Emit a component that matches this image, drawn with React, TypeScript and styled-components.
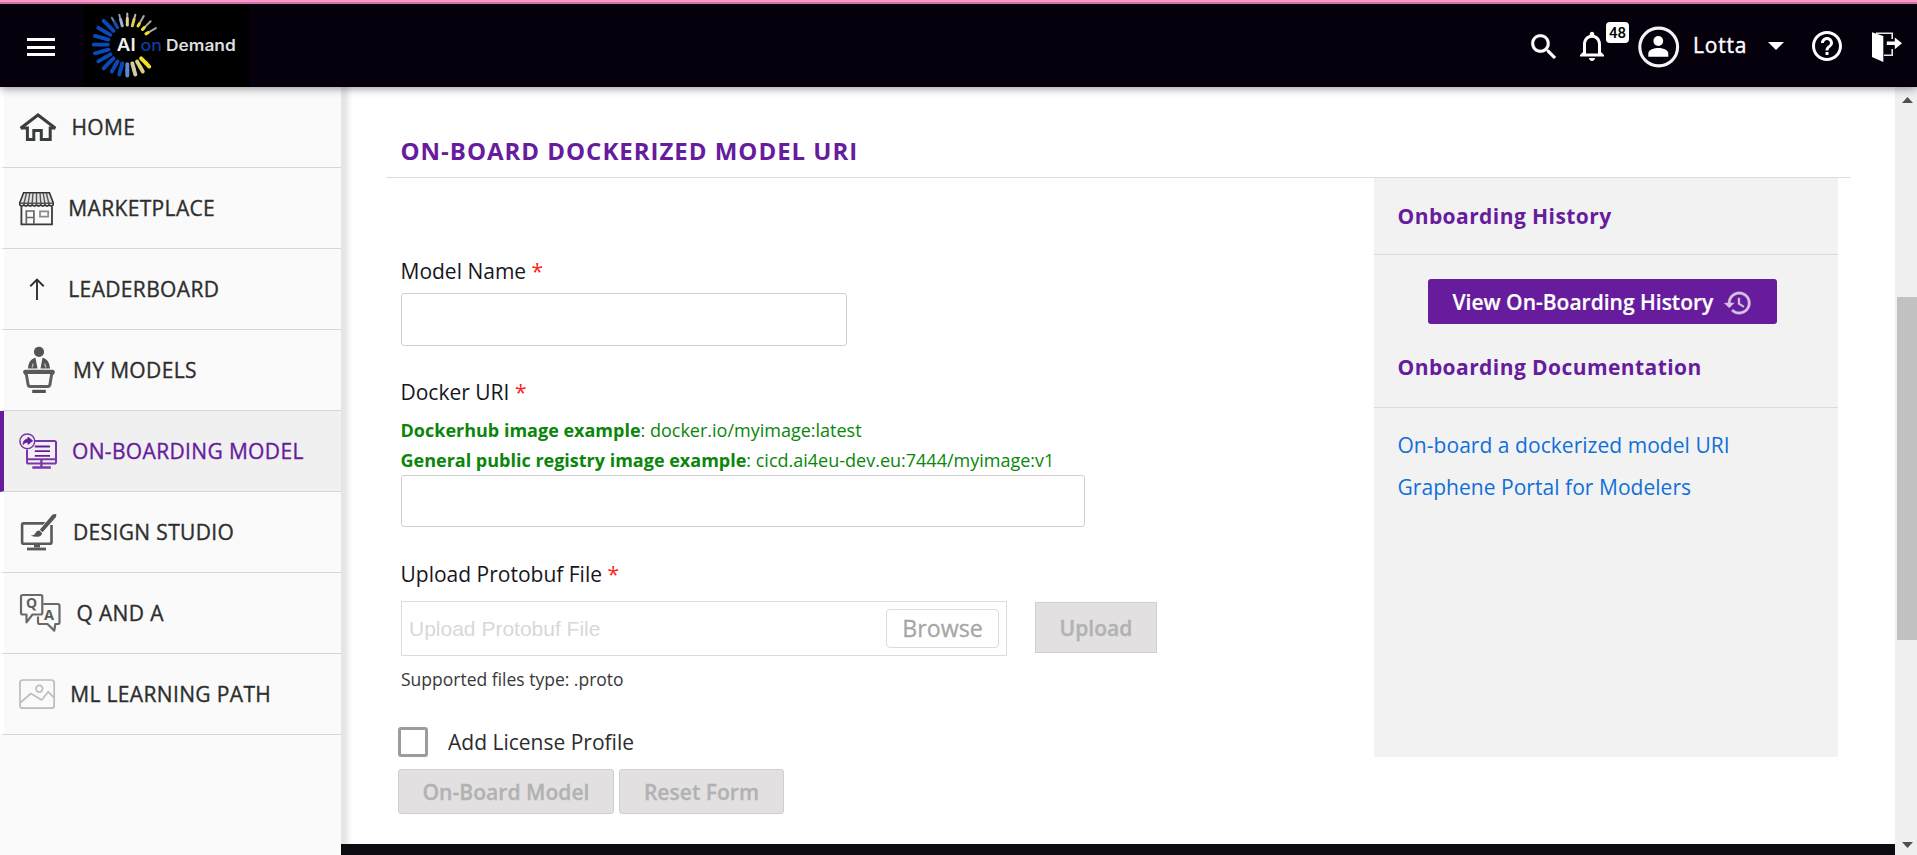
import React from "react";
import styled, { createGlobalStyle, css } from "styled-components";

const purple = "#671c9d";

const GlobalStyle = createGlobalStyle`
  *, *::before, *::after { box-sizing: border-box; }
  body {
    margin: 0;
    background: #fff;
    overflow: hidden;
    font-family: "Open Sans", "Noto Sans", sans-serif;
    font-size: 21px;
  }
  svg { display: block; flex: none; }
`;

/* ---------- shell ---------- */

const Page = styled.div`
  display: flex;
  flex-direction: column;
  width: 100%;
  height: 855px;
`;

const Body = styled.div`
  display: flex;
  flex: 1;
  min-height: 0;
`;

/* ---------- header ---------- */

const Header = styled.header`
  position: relative;
  z-index: 2;
  display: flex;
  align-items: center;
  height: 87px;
  flex: none;
  padding: 0 15px 0 27px;
  border-top: 2px solid #ff96cb;
  background: linear-gradient(#cf72a5 0 2px, #05000c 2px);
  box-shadow: 0 1px 9px rgba(0, 0, 0, 0.45);
`;

const MenuButton = styled.div`
  display: flex;
  flex-direction: column;
  gap: 4.5px;
  width: 28px;
  margin-top: 5px;
`;

const MenuLine = styled.span`
  height: 3px;
  background: #fff;
`;

const LogoBox = styled.div`
  margin: 2px 0 0 29px;
  background: #000;
`;

const HeaderTools = styled.div`
  display: flex;
  align-items: center;
  margin-left: auto;
`;

const Tool = styled.div<{ $gap?: number; $drop?: number }>`
  position: relative;
  margin-left: ${(p) => p.$gap ?? 0}px;
  margin-top: ${(p) => p.$drop ?? 2}px;
`;

const Badge = styled.span`
  position: absolute;
  left: 32px;
  top: -6px;
  width: 23px;
  height: 21px;
  border-radius: 4px;
  background: #fff;
  color: #000;
  font: 500 15px/22px Roboto, sans-serif;
  text-align: center;
`;

const UserName = styled.div`
  margin-left: 13px;
  width: 55px;
  color: #fff;
  line-height: 30px;
  letter-spacing: 0.8px;
  -webkit-text-stroke: 0.4px #fff;
`;

/* ---------- sidebar ---------- */

const Sidebar = styled.nav`
  width: 341px;
  flex: none;
  background: #fafafa;
`;

const NavItem = styled.div<{ $active?: boolean }>`
  display: flex;
  align-items: center;
  height: 81px;
  padding-left: 15px;
  border-left: 4px solid #fff;
  border-bottom: 1px solid #d5d5d5;
  color: #2e2e2e;
  ${(p) =>
    p.$active &&
    css`
      background: #f0f0f0;
      border-left-color: ${purple};
      color: ${purple};
    `}
`;

const NavLabel = styled.span`
  margin-left: 14px;
  letter-spacing: 0.35px;
  white-space: nowrap;
  -webkit-text-stroke: 0.35px currentColor;
`;

/* ---------- main column ---------- */

const Main = styled.main`
  display: flex;
  flex-direction: column;
  flex: 1;
  min-width: 0;
  background: linear-gradient(90deg, #e4e4e4 0, #e8e8e8 5px, #f6f6f6 8px, #fff 12px);
`;

const Content = styled.div`
  flex: 1;
  padding: 48px 45px 0;
`;

const Footer = styled.div`
  height: 11px;
  background: #0d0a11;
`;

const PageTitle = styled.h1`
  margin: 0;
  padding: 0 0 10px 14.5px;
  border-bottom: 1px solid #dcdcdc;
  color: ${purple};
  font-size: 24px;
  font-weight: 700;
  line-height: 32px;
  letter-spacing: 0.98px;
`;

const Columns = styled.div`
  display: flex;
  justify-content: space-between;
  padding: 0 12px;
`;

const Form = styled.form`
  padding-top: 78px;
`;

const Fields = styled.div`
  padding-left: 3px;
`;

const FieldLabel = styled.label`
  display: block;
  margin-left: -0.5px;
  color: #16161e;
  line-height: 30px;
`;

const Star = styled.span`
  color: #f22;
`;

const TextInput = styled.div<{ $w: number; $h: number; $gap?: number; $after: number }>`
  width: ${(p) => p.$w}px;
  height: ${(p) => p.$h}px;
  margin: ${(p) => p.$gap ?? 0}px 0 ${(p) => p.$after}px;
  border: 1px solid #cfcfcf;
  border-radius: 3px;
  background: #fff;
`;

const Hints = styled.div`
  margin-top: 8px;
  margin-left: -0.5px;
  color: #0a860a;
  font-size: 18px;
  line-height: 30px;
`;

const UploadRow = styled.div`
  display: flex;
  align-items: flex-start;
  margin-top: 12px;
`;

const FilePicker = styled.div`
  display: flex;
  align-items: center;
  justify-content: space-between;
  width: 606px;
  height: 55px;
  padding: 0 7px;
  border: 1px solid #dcdcdc;
`;

const Placeholder = styled.span`
  color: #d8d8d8;
  font-family: "Liberation Sans", Arial, sans-serif;
  font-size: 21px;
`;

const Browse = styled.span`
  width: 113px;
  height: 39px;
  border: 1px solid #dcdcdc;
  border-radius: 4px;
  color: #a6a6a6;
  font-size: 23.2px;
  line-height: 37px;
  text-align: center;
  -webkit-text-stroke: 0.3px #a6a6a6;
`;

const DisabledButton = styled.span<{ $w: number; $h: number; $square?: boolean }>`
  width: ${(p) => p.$w}px;
  height: ${(p) => p.$h}px;
  border: 1px solid #d0cfd0;
  border-radius: ${(p) => (p.$square ? 0 : 3)}px;
  background: #e2e0e1;
  color: #b3b2b3;
  font-size: 21.1px;
  font-weight: 600;
  line-height: ${(p) => p.$h - 2}px;
  text-align: center;
  -webkit-text-stroke: 0.3px #b3b2b3;
`;

const UploadSlot = styled.div`
  display: flex;
  margin: 1px 0 0 28px;
`;

const Note = styled.div`
  margin-top: 8px;
  color: #383838;
  font-size: 17.5px;
  line-height: 30px;
`;

const CheckRow = styled.div`
  display: flex;
  gap: 20px;
  margin-top: 33px;
  color: #2c2c2c;
  line-height: 30px;
`;

const CheckBox = styled.span`
  width: 30px;
  height: 30px;
  border: 3px solid #9c9c9c;
  border-radius: 3px;
`;

const Actions = styled.div`
  display: flex;
  gap: 5px;
  margin-top: 12px;
`;

/* ---------- right panel ---------- */

const Panel = styled.aside`
  width: 464px;
  height: 579px;
  background: #f2f2f2;
`;

const PanelHeading = styled.h2<{ $h: number; $gap?: number }>`
  margin: ${(p) => p.$gap ?? 0}px 0 0;
  padding-left: 23.5px;
  height: ${(p) => p.$h}px;
  border-bottom: 1px solid #dadada;
  color: ${purple};
  font-size: 21px;
  font-weight: 700;
  line-height: ${(p) => p.$h - 1}px;
  letter-spacing: 0.43px;
`;

const HistoryButton = styled.div`
  display: flex;
  align-items: center;
  width: 349px;
  height: 45px;
  margin: 24px 0 0 54px;
  padding-left: 24.5px;
  border-radius: 3px;
  background: ${purple};
  color: #fff;
  font-weight: 600;
  white-space: nowrap;
  -webkit-text-stroke: 0.2px #fff;
`;

const HistoryIconSlot = styled.span`
  margin: 3px 0 0 9.5px;
`;

const Links = styled.div`
  display: flex;
  flex-direction: column;
  padding: 16px 0 0 23.5px;
`;

const DocLink = styled.a`
  color: #0f70d8;
  line-height: 42px;
  letter-spacing: 0.04px;
`;

/* ---------- scrollbar ---------- */

const Scrollbar = styled.div`
  display: flex;
  flex-direction: column;
  align-items: center;
  width: 22px;
  flex: none;
  padding: 10px 0 7px 2px;
  background: #f0f0f0;
`;

const Thumb = styled.div`
  width: 20px;
  height: 343px;
  margin: 194px 0 auto;
  background: #c1c1c1;
`;

/* ---------- drawings ---------- */

/* angle, inner colour, outer colour */
const spokes: [number, string, string][] = [
  [30, "#f2df24", "#a9a9a9"],
  [45, "#f0de2c", "#a5a5a5"],
  [60, "#e8d93c", "#a9a9a9"],
  [75, "#d9cf5a", "#b5b5b0"],
  [90, "#dcd699", "#b0b0a8"],
  [105, "#9fb0d0", "#8f9db8"],
  [120, "#1a4cae", "#6e83ad"],
  [135, "#0b48b8", "#0b48b8"],
  [150, "#0b48b8", "#0b48b8"],
  [165, "#0b48b8", "#0b48b8"],
  [180, "#0b48b8", "#0b48b8"],
  [195, "#0b48b8", "#0b48b8"],
  [210, "#0b48b8", "#0b48b8"],
  [225, "#0b48b8", "#0b48b8"],
  [240, "#0b48b8", "#0b48b8"],
  [255, "#0b48b8", "#0b48b8"],
  [270, "#5f88cf", "#5f88cf"],
  [285, "#d0cca6", "#d0cca6"],
  [300, "#ddd27a", "#ddd27a"],
  [315, "#f4e222", "#f4e222"],
];

const Logo = () => (
  <svg width="165" height="83" viewBox="0 0 165 83">
    {spokes.map(([deg, inner, outer]) => {
      const a = (deg * Math.PI) / 180;
      const at = (r: number) => [43.3 + r * Math.cos(a), 40.6 - r * Math.sin(a)];
      const thin = deg < 125;
      const [x1, y1] = at(deg < 75 ? 21.5 : 19.5);
      const [xm, ym] = at(thin && deg < 75 ? 24 : 26);
      const [x2, y2] = at(deg >= 135 && deg <= 225 ? 33.5 : deg < 75 ? 33 : 31);
      return (
        <g key={deg} strokeLinecap="round">
          <line x1={xm} y1={ym} x2={x2} y2={y2} stroke={outer} strokeWidth={thin ? 2 : 3.9} />
          <line x1={x1} y1={y1} x2={xm} y2={ym} stroke={inner} strokeWidth={thin ? 3 : 3.9} />
        </g>
      );
    })}
    <g fontFamily="Inter, sans-serif" fontWeight="500">
      <text x="32.8" y="46.7" fontSize="17.5" fontWeight="600" fill="#f0f0f0" textLength="18.8" lengthAdjust="spacingAndGlyphs">AI</text>
      <text x="56.5" y="46.7" fontSize="16.5" fill="#0d3c9e" textLength="21.5" lengthAdjust="spacingAndGlyphs">on</text>
      <text x="82" y="46.7" fontSize="15.7" fontWeight="600" fill="#dedede" textLength="69.8" lengthAdjust="spacingAndGlyphs">Demand</text>
    </g>
  </svg>
);

const Material = ({ size, d, fill = "#fff", weight = 0 }: { size: number; d: string; fill?: string; weight?: number }) => (
  <svg width={size} height={size} viewBox="0 0 24 24" fill={fill} stroke={fill} strokeWidth={weight}>
    <path d={d} />
  </svg>
);

const searchPath =
  "M15.5 14h-.79l-.28-.27C15.41 12.59 16 11.11 16 9.5 16 5.91 13.09 3 9.5 3S3 5.91 3 9.5 5.91 16 9.5 16c1.61 0 3.09-.59 4.23-1.57l.27.28v.79l5 4.99L20.49 19l-4.99-5zm-6 0C7.01 14 5 11.99 5 9.5S7.01 5 9.5 5 14 7.01 14 9.5 11.99 14 9.5 14z";
const bellPath =
  "M12 22c1.1 0 2-.9 2-2h-4c0 1.1.9 2 2 2zm6-6v-5c0-3.07-1.63-5.64-4.5-6.32V4c0-.83-.67-1.5-1.5-1.5s-1.5.67-1.5 1.5v.68C7.64 5.36 6 7.92 6 11v5l-2 2v1h16v-1l-2-2zm-2 1H8v-6c0-2.48 1.51-4.5 4-4.5s4 2.02 4 4.5v6z";
const helpPath =
  "M11 18h2v-2h-2v2zm1-16C6.48 2 2 6.48 2 12s4.48 10 10 10 10-4.48 10-10S17.52 2 12 2zm0 18c-4.41 0-8-3.59-8-8s3.59-8 8-8 8 3.59 8 8-3.59 8-8 8zm0-14c-2.21 0-4 1.79-4 4h2c0-1.1.9-2 2-2s2 .9 2 2c0 2-3 1.75-3 5h2c0-2.25 3-2.5 3-5 0-2.21-1.79-4-4-4z";
const historyPath =
  "M13 3c-4.97 0-9 4.03-9 9H1l3.89 3.89.07.14L9 12H6c0-3.87 3.13-7 7-7s7 3.13 7 7-3.13 7-7 7c-1.93 0-3.68-.79-4.94-2.06l-1.42 1.42C8.27 19.99 10.51 21 13 21c4.97 0 9-4.03 9-9s-4.03-9-9-9zm-1 5v5l4.28 2.54.72-1.21-3.5-2.08V8H12z";

const AvatarIcon = () => (
  <svg width="42" height="42" viewBox="0 0 42 42">
    <circle cx="20.7" cy="21" r="18.9" fill="none" stroke="#f4f4f4" strokeWidth="3.1" />
    <circle cx="20.3" cy="15" r="4.9" fill="#fff" />
    <path d="M10.3 30.8v-3.3c0-4 6-5.6 10-5.6s10 1.6 10 5.6v3.3z" fill="#fff" />
  </svg>
);

const Caret = () => (
  <svg width="16" height="8" viewBox="0 0 16 8">
    <path d="M0 0h16L8 8z" fill="#fff" />
  </svg>
);

const ExitIcon = () => (
  <svg width="30" height="30" viewBox="0 0 30 30">
    <path d="M4 1.2H20.2V7M20.2 17v6.3H12" fill="none" stroke="#e6e6e6" strokeWidth="1.6" />
    <path d="M6 2.2L11.3 4V30L0 25V.3z" fill="#fff" />
    <path d="M14.8 9.6h8V5.4L30 11.3l-7.2 5.9v-4.1h-8z" fill="#fff" />
  </svg>
);

const HomeIcon = () => (
  <svg width="38.5" height="80" viewBox="0 0 38.5 80" fill="none" stroke="#3a3d3e" strokeWidth="3">
    <path d="M1.6 41.2L19 28 36.4 41.2" />
    <path d="M1.8 41H8.4V52.6H14.8V43.4H22.3V52.6H31.2V41H36.3" />
  </svg>
);

const MarketIcon = () => (
  <svg width="35.3" height="80" viewBox="0 0 35.3 80" fill="none" stroke="#555" strokeWidth="1.4">
    <path d="M4.6 24.7H30.4L34.3 35v1.6a2.2 2.2 0 0 1-4.2 0a2.2 2.2 0 0 1-4.2 0a2.2 2.2 0 0 1-4.2 0a2.2 2.2 0 0 1-4.2 0a2.2 2.2 0 0 1-4.2 0a2.2 2.2 0 0 1-4.2 0a2.2 2.2 0 0 1-4.2 0a2.2 2.2 0 0 1-4.2 0V35z" stroke="#333" fill="#e2e2e2" strokeWidth="1.6" />
    <path d="M.8 35.2H34.3" strokeWidth="1.6" />
    <path d="M7.5 25L4.6 37M10.8 25L8.8 37M14 25l-1 12M17.5 25v12M21 25l1 12M24.2 25l2 12M27.3 25l3 12" />
    <path d="M2.4 39V56.4H33V39" stroke="#3a3a3a" strokeWidth="1.8" />
    <path d="M7.3 56V43h7.6V56M8 49.5h6" stroke="#666" strokeWidth="1.7" />
    <path d="M21 43.4h8.2v5.2H21z" stroke="#8a8a8a" strokeWidth="1.7" />
  </svg>
);

const ArrowUpIcon = () => (
  <svg width="35.3" height="80" viewBox="0 0 35.3 80" fill="none" stroke="#2f2f2f" strokeWidth="1.9">
    <path d="M18 51V31M11.3 37.2L18 30.6l6.7 6.6" />
  </svg>
);

const ModelsIcon = () => (
  <svg width="40" height="80" viewBox="0 0 40 80" fill="#545454">
    <circle cx="20" cy="21.8" r="5.1" />
    <path d="M16.5 27.8C12 28.6 9.3 33 9 38.5h9.500zM23.500 27.800C28 28.600 30.700 33 31 38.500h-9.500z" />
    <path d="M14.300 33.500l-1.200 4M25.700 33.500l1.200 4" stroke="#bbb" strokeWidth="1.200" />
    <path d="M6.300 41.300H33.700V43.600H32.800L30.900 54.600Q30.600 56.500 28.800 56.500H11.200Q9.400 56.500 9.100 54.600L7.200 43.600H6.300z" fill="none" stroke="#5f5f5f" strokeWidth="3" strokeLinejoin="round" />
    <path d="M6 42H34" stroke="#5a5a5a" strokeWidth="3.800" strokeLinecap="round" />
    <rect x="13.200" y="59.800" width="13.600" height="3.200" />
  </svg>
);

const OnboardIcon = () => (
  <svg width="39" height="80" viewBox="0 0 39 80" fill="none" stroke="#7a35aa" strokeWidth="2">
    <path d="M16 30H35.4Q37 30 37 31.6V51Q37 52.6 35.4 52.6H9.6Q8 52.6 8 51V38.5M8 48.2H37" />
    <circle cx="8.3" cy="30.3" r="7.4" strokeWidth="1.5" />
    <path d="M4 33.5c.2-3.6 2-5.3 5-5.4v-2l4.6 3.7L9 33.4v-2.1c-2 0-3.6.5-5 2.2z" fill={purple} stroke={purple} strokeWidth=".9" />
    <path d="M15.8 35.5H31M15.8 40.2H31M15.8 44.8H31" stroke={purple} strokeWidth="1.8" />
    <path d="M22.4 48.5V56M13.3 56.5H31.8" strokeWidth="2.3" />
  </svg>
);

const DesignIcon = () => (
  <svg width="40" height="80" viewBox="0 0 40 80" fill="none" stroke="#5a5a5a" strokeWidth="2.6">
    <path d="M31 31.4H4.6Q3.1 31.4 3.1 32.9V50.3Q3.1 51.8 4.6 51.8H31Q32.5 51.8 32.5 50.3V33" />
    <path d="M8 57H27" strokeWidth="2.8" />
    <path d="M15 52.5h6v3h-6z" fill="#5a5a5a" stroke="none" />
    <path d="M36.4 22.2L24 37.2" strokeWidth="5.5" stroke="#fafafa" />
    <path d="M37.400 22L33.600 22.600 20.800 37.800l2.800 2.400L37 25z" fill="#555" stroke="none" />
    <path d="M20.400 38.600l2.800 2.600c-.6 3.600-5.600 4.600-11.400 2.600 3.200-.2 4-1.600 4.900-3.200c.8-1.400 2.200-2.200 3.700-2z" fill="#555" stroke="none" />
  </svg>
);

const QaIcon = () => (
  <svg width="43.5" height="80" viewBox="0 0 43.5 80" fill="none" stroke="#6a6a6a" strokeWidth="2.2" strokeLinejoin="round">
    <path d="M24.3 31H38.8Q40.5 31 40.500 32.700V49.300Q40.500 51 38.800 51H36.300L35.300 57.600 28.500 51H20.700Q19 51 19 49.300V43.500" />
    <path d="M3.800 22H21.600Q23.300 22 23.300 23.700V39.800Q23.300 41.500 21.600 41.500H13.500L7.500 49.300V41.500H3.800Q2 41.500 2 39.800V23.700Q2 22 3.800 22z" />
    <text x="7" y="34.900" fontFamily="Open Sans, sans-serif" fontWeight="700" fontSize="14" fill="#5f5f5f" stroke="none">Q</text>
    <text x="24.900" y="46.600" fontFamily="Open Sans, sans-serif" fontWeight="700" fontSize="14.500" fill="#5a5a5a" stroke="none">A</text>
  </svg>
);

const PathIcon = () => (
  <svg width="37.2" height="80" viewBox="0 0 37.2 80" fill="none" stroke="#bcbcbc" strokeWidth="1.7">
    <rect x="1" y="26" width="34.2" height="28.2" rx="2.8" />
    <circle cx="20.3" cy="34.7" r="3.3" />
    <path d="M1.5 48.5L11.8 39.5 22.7 46 29.3 37.8 34.8 43.5" />
  </svg>
);

const ScrollArrow = ({ down }: { down?: boolean }) => (
  <svg width="11" height="6" viewBox="0 0 11 6">
    <path d={down ? "M0 0h11L5.5 6z" : "M0 6h11L5.5 0z"} fill="#505050" />
  </svg>
);

const navItems = [
  { label: "HOME", Icon: HomeIcon },
  { label: "MARKETPLACE", Icon: MarketIcon },
  { label: "LEADERBOARD", Icon: ArrowUpIcon },
  { label: "MY MODELS", Icon: ModelsIcon },
  { label: "ON-BOARDING MODEL", Icon: OnboardIcon, active: true },
  { label: "DESIGN STUDIO", Icon: DesignIcon },
  { label: "Q AND A", Icon: QaIcon },
  { label: "ML LEARNING PATH", Icon: PathIcon },
];

export default function App() {
  return (
    <>
      <GlobalStyle />
      <Page>
        <Header>
          <MenuButton>
            <MenuLine />
            <MenuLine />
            <MenuLine />
          </MenuButton>
          <LogoBox>
            <Logo />
          </LogoBox>
          <HeaderTools>
            <Tool $drop={4}>
              <Material size={34} d={searchPath} weight={0.2} />
            </Tool>
            <Tool $gap={13}>
              <Material size={36} d={bellPath} />
              <Badge>48</Badge>
            </Tool>
            <Tool $gap={28} $drop={5}>
              <AvatarIcon />
            </Tool>
            <UserName>Lotta</UserName>
            <Tool $gap={20}>
              <Caret />
            </Tool>
            <Tool $gap={25} $drop={3}>
              <Material size={36} d={helpPath} />
            </Tool>
            <Tool $gap={27} $drop={5}>
              <ExitIcon />
            </Tool>
          </HeaderTools>
        </Header>
        <Body>
          <Sidebar>
            {navItems.map(({ label, Icon, active }) => (
              <NavItem key={label} $active={active}>
                <Icon />
                <NavLabel>{label}</NavLabel>
              </NavItem>
            ))}
          </Sidebar>
          <Main>
            <Content>
              <PageTitle>ON-BOARD DOCKERIZED MODEL URI</PageTitle>
              <Columns>
                <Form>
                  <Fields>
                    <FieldLabel>
                      Model Name <Star>*</Star>
                    </FieldLabel>
                    <TextInput $w={446} $h={53} $gap={7} $after={31} />
                    <FieldLabel>
                      Docker URI <Star>*</Star>
                    </FieldLabel>
                    <Hints>
                      <div>
                        <b>Dockerhub image example</b>: docker.io/myimage:latest
                      </div>
                      <div>
                        <b>General public registry image example</b>: cicd.ai4eu-dev.eu:7444/myimage:v1
                      </div>
                    </Hints>
                    <TextInput $w={684} $h={52} $after={32} />
                    <FieldLabel>
                      Upload Protobuf File <Star>*</Star>
                    </FieldLabel>
                    <UploadRow>
                      <FilePicker>
                        <Placeholder>Upload Protobuf File</Placeholder>
                        <Browse>Browse</Browse>
                      </FilePicker>
                      <UploadSlot>
                        <DisabledButton $w={122} $h={51} $square>
                          Upload
                        </DisabledButton>
                      </UploadSlot>
                    </UploadRow>
                    <Note>Supported files type: .proto</Note>
                  </Fields>
                  <CheckRow>
                    <CheckBox />
                    <span>Add License Profile</span>
                  </CheckRow>
                  <Actions>
                    <DisabledButton $w={216} $h={45}>On-Board Model</DisabledButton>
                    <DisabledButton $w={165} $h={45}>Reset Form</DisabledButton>
                  </Actions>
                </Form>
                <Panel>
                  <PanelHeading $h={77}>Onboarding History</PanelHeading>
                  <HistoryButton>
                    View On-Boarding History
                    <HistoryIconSlot>
                      <Material size={30} d={historyPath} fill="#d6c2e4" weight={0.3} />
                    </HistoryIconSlot>
                  </HistoryButton>
                  <PanelHeading $h={80} $gap={4}>Onboarding Documentation</PanelHeading>
                  <Links>
                    <DocLink>On-board a dockerized model URI</DocLink>
                    <DocLink>Graphene Portal for Modelers</DocLink>
                  </Links>
                </Panel>
              </Columns>
            </Content>
            <Footer />
          </Main>
          <Scrollbar>
            <ScrollArrow />
            <Thumb />
            <ScrollArrow down />
          </Scrollbar>
        </Body>
      </Page>
    </>
  );
}
